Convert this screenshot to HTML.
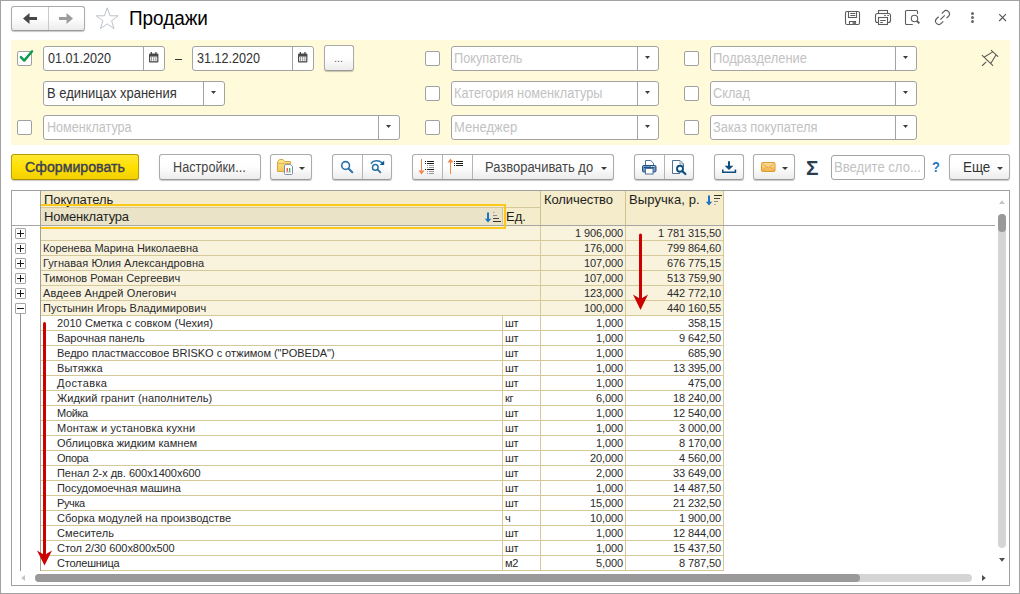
<!DOCTYPE html>
<html lang="ru">
<head>
<meta charset="utf-8">
<title>Продажи</title>
<style>
*{box-sizing:border-box;margin:0;padding:0}
html,body{width:1020px;height:594px;overflow:hidden;background:#fff}
body{position:relative;font-family:"Liberation Sans",Arial,sans-serif;font-size:13px;color:#333}
.abs,.btn,.fld,.cb,.r,.pm,.t,svg{position:absolute}
.t{white-space:nowrap;line-height:16px;transform-origin:0 50%}
#win{position:absolute;left:0;top:0;width:1020px;height:594px;border:1px solid #a2a2a2}
.btn{height:26px;top:154px;border:1px solid #ababab;border-bottom-color:#9a9a9a;border-radius:3px;background:linear-gradient(#ffffff 0%,#fefefe 50%,#ececec 100%);box-shadow:0 1px 1px rgba(0,0,0,.22)}
.btn.def{background:linear-gradient(#ffe836 0%,#ffe000 50%,#f3cf00 100%);border-color:#b89c00;border-bottom-color:#a98f00}
.sep{position:absolute;top:0;width:1px;height:24px;background:#b4b4b4}
.dd2{position:absolute;width:5px;height:3px;background:#3c3c3c;clip-path:polygon(0 0,100% 0,50% 100%)}
.dd{position:absolute;width:0;height:0;border-left:3px solid transparent;border-right:3px solid transparent;border-top:3px solid #3c3c3c}
#flt{position:absolute;left:11px;top:40px;width:999px;height:105px;background:#fffad9}
.fld{height:25px;border:1px solid #a3a3a3;border-radius:3px;background:#fff}
.fld .sep{background:#a3a3a3;height:23px}
.cb{width:15px;height:15px;border:1px solid #a0a0a0;border-radius:2px;background:#fff}
#tbl{position:absolute;left:11px;top:190px;width:999px;height:396px;border:1px solid #9f9f9f;background:#fff}
.hd{position:absolute;font-size:13px;line-height:15px;color:#1e1e1e;white-space:nowrap}
.r{left:41px;width:683px;height:15px;font-size:11px;line-height:14px;color:#2a2a2a;border-bottom:1px solid #d6c999;background:#fff;white-space:nowrap}
.r.g{background:#f9f3de}
.c{position:absolute;top:0;height:14px;overflow:hidden}
.c.n{left:0;width:461px;padding-left:2px}
.c.n1{padding-left:16px}
.c.u{left:461px;width:38px;border-left:1px solid #d6c999;padding-left:2px;letter-spacing:-0.2px}
.c.q{left:499px;width:85px;border-left:1px solid #d6c999;text-align:right;padding-right:2px;letter-spacing:-0.1px}
.c.v{left:584px;width:99px;border-left:1px solid #d6c999;border-right:1px solid #d6c999;text-align:right;padding-right:2px;letter-spacing:-0.1px}
.pm{left:15px;width:11px;height:11px;border:1px solid #a6a6a6;border-radius:1px;background:#fff}
.pm .h{position:absolute;left:1px;top:4px;width:7px;height:1px;background:#1a1a1a}
.pm .v{position:absolute;left:4px;top:1px;width:1px;height:7px;background:#1a1a1a}
</style>
</head>
<body>
<!-- ===== title bar ===== -->
<div class="btn" style="left:11px;top:6px;width:74px;height:25px"><span class="sep" style="left:36px;height:23px;background:#c9c9c9"></span>
<svg style="left:0;top:0" width="72" height="23" viewBox="0 0 72 23"><path d="M11 11.5 L17.5 6 V10 H25 V13 H17.5 V17z" fill="#474747"/><path d="M61 11.5 L54.5 6 V10 H47 V13 H54.5 V17z" fill="#9c9c9c"/></svg></div>
<svg style="left:95px;top:7px" width="24" height="23" viewBox="0 0 24 23"><path d="M12.2 0.8 L15 8.8 H23.2 L16.6 13.8 L19 21.7 L12.2 16.9 L5.4 21.7 L7.8 13.8 L1.2 8.8 H9.4z" fill="#fff" stroke="#bcc2ca" stroke-width="1"/></svg>

<svg style="left:840px;top:4px" width="176" height="28" viewBox="840 4 176 28" fill="none" stroke="#5c5c5c" stroke-width="1.1">
<rect x="845.5" y="11.5" width="14" height="13" rx="1.6"/>
<path d="M848.5 11.5v6h8v-6M850.3 13.5h5M850.3 15.5h5M849.5 24.5v-3h6v3"/>
<rect x="852.5" y="22" width="3" height="2.5" fill="#777" stroke="none"/>
<rect x="878.5" y="10.5" width="9" height="3"/>
<rect x="875.5" y="13.5" width="15" height="9" rx="2"/>
<rect x="878.5" y="17.5" width="9" height="7" fill="#fff"/>
<path d="M884.2 15.5h1.6M887.3 15.5h1.6M880.2 20.5h5.5M880.2 22.5h2.6"/>
<path d="M912.8 24.5H906.5a1 1 0 0 1-1-1V11.5a1 1 0 0 1 1-1H916.5a1 1 0 0 1 1 1V14"/>
<circle cx="914.5" cy="18.5" r="3.2" fill="#fff"/>
<path d="M917 21L919.3 23.4" stroke-width="2"/>
<g transform="translate(942.5 17.5) rotate(-45)"><path d="M2.4 -3.3H5.1A3.3 3.3 0 0 1 5.1 3.3H2.4M-2.2 3.3H-5.1A3.3 3.3 0 0 1 -5.1 -3.3H-2.2M-3 0H3.1" stroke-width="1.15"/></g>
<g fill="#6a6a6a" stroke="none"><circle cx="972.5" cy="13.5" r="1.5"/><circle cx="972.5" cy="17.5" r="1.5"/><circle cx="972.5" cy="21.5" r="1.5"/></g>
<path d="M999.2 14.2L1006 21M1006 14.2L999.2 21" stroke="#555"/>
</svg>


<!-- ===== filter panel ===== -->
<div id="flt"></div>
<div class="cb" style="left:17px;top:51px"></div>
<svg style="left:17px;top:47px" width="18" height="18" viewBox="0 0 18 18"><path d="M3.9 10.1 L7.2 13.6 L15.1 4.3" fill="none" stroke="#0d9a4a" stroke-width="2.4" stroke-linecap="round" stroke-linejoin="round"/></svg>
<div class="fld" style="left:43px;top:46px;width:122px"><span class="sep" style="left:99px"></span></div>
<div class="abs" style="left:175px;top:59px;width:7px;height:1px;background:#333"></div>
<div class="fld" style="left:192px;top:46px;width:122px"><span class="sep" style="left:99px"></span></div>
<div class="btn" style="left:324px;top:45px;width:30px;height:26px"></div>
<div class="fld" style="left:43px;top:81px;width:182px"><span class="sep" style="left:159px"></span><span class="dd2" style="left:167px;top:9px"></span></div>
<div class="cb" style="left:17px;top:120px"></div>
<div class="fld" style="left:43px;top:115px;width:357px"><span class="sep" style="left:334px"></span><span class="dd2" style="left:342px;top:9px"></span></div>

<div class="cb" style="left:425px;top:51px"></div>
<div class="fld" style="left:451px;top:46px;width:208px"><span class="sep" style="left:185px"></span><span class="dd2" style="left:193px;top:9px"></span></div>
<div class="cb" style="left:425px;top:86px"></div>
<div class="fld" style="left:451px;top:81px;width:208px"><span class="sep" style="left:185px"></span><span class="dd2" style="left:193px;top:9px"></span></div>
<div class="cb" style="left:425px;top:120px"></div>
<div class="fld" style="left:451px;top:115px;width:208px"><span class="sep" style="left:185px"></span><span class="dd2" style="left:193px;top:9px"></span></div>

<div class="cb" style="left:684px;top:51px"></div>
<div class="fld" style="left:710px;top:46px;width:207px"><span class="sep" style="left:184px"></span><span class="dd2" style="left:192px;top:9px"></span></div>
<div class="cb" style="left:684px;top:86px"></div>
<div class="fld" style="left:710px;top:81px;width:207px"><span class="sep" style="left:184px"></span><span class="dd2" style="left:192px;top:9px"></span></div>
<div class="cb" style="left:684px;top:120px"></div>
<div class="fld" style="left:710px;top:115px;width:207px"><span class="sep" style="left:184px"></span><span class="dd2" style="left:192px;top:9px"></span></div>
<svg style="left:149px;top:52px" width="10" height="11" viewBox="0 0 10 11"><rect x="0" y="1.6" width="9.4" height="8.8" rx="1" fill="#4a4a4a"/><rect x="1.2" y="4.6" width="7" height="4.6" fill="#fff"/><rect x="1.7" y="0" width="1.3" height="2.4" fill="#4a4a4a"/><rect x="6.3" y="0" width="1.3" height="2.4" fill="#4a4a4a"/><g fill="#4a4a4a"><rect x="2" y="5.4" width="1.1" height="1.1"/><rect x="4.15" y="5.4" width="1.1" height="1.1"/><rect x="6.3" y="5.4" width="1.1" height="1.1"/><rect x="2" y="7.4" width="1.1" height="1.1"/><rect x="4.15" y="7.4" width="1.1" height="1.1"/><rect x="6.3" y="7.4" width="1.1" height="1.1"/></g></svg><svg style="left:298px;top:52px" width="10" height="11" viewBox="0 0 10 11"><rect x="0" y="1.6" width="9.4" height="8.8" rx="1" fill="#4a4a4a"/><rect x="1.2" y="4.6" width="7" height="4.6" fill="#fff"/><rect x="1.7" y="0" width="1.3" height="2.4" fill="#4a4a4a"/><rect x="6.3" y="0" width="1.3" height="2.4" fill="#4a4a4a"/><g fill="#4a4a4a"><rect x="2" y="5.4" width="1.1" height="1.1"/><rect x="4.15" y="5.4" width="1.1" height="1.1"/><rect x="6.3" y="5.4" width="1.1" height="1.1"/><rect x="2" y="7.4" width="1.1" height="1.1"/><rect x="4.15" y="7.4" width="1.1" height="1.1"/><rect x="6.3" y="7.4" width="1.1" height="1.1"/></g></svg>
<svg style="left:978px;top:46px" width="24" height="24" viewBox="978 46 24 24" fill="none" stroke="#5a5a5a" stroke-width="1.1" stroke-linecap="round"><path d="M991.3 50.4L997.8 56.4M982.2 55.3L992.7 65.4M986 62.2L982.4 65.5M984.3 57L992.4 52.1M990.9 63.3L995.8 55.2"/></svg>


<!-- ===== toolbar ===== -->
<div class="btn def" style="left:11px;width:128px"></div>
<div class="btn" style="left:159px;width:102px"></div>
<div class="btn" style="left:270px;width:42px"><span class="dd" style="left:28px;top:12px"></span></div>
<div class="btn" style="left:332px;width:60px"><span class="sep" style="left:29px"></span></div>
<div class="btn" style="left:412px;width:202px"><span class="sep" style="left:29px"></span><span class="sep" style="left:59px"></span><span class="dd" style="left:188px;top:12px"></span></div>
<div class="btn" style="left:634px;width:60px"><span class="sep" style="left:29px"></span></div>
<div class="btn" style="left:714px;width:30px"></div>
<div class="btn" style="left:753px;width:42px"><span class="dd" style="left:28px;top:12px"></span></div>
<div class="fld" style="left:831px;top:155px;width:94px;height:25px"></div>
<div class="btn" style="left:949px;width:61px"><span class="dd" style="left:47px;top:12px"></span></div>

<svg style="left:270px;top:154px" width="42" height="26" viewBox="270 154 42 26">
<defs><linearGradient id="fg" x1="0" y1="0" x2="0" y2="1"><stop offset="0" stop-color="#ffe98a"/><stop offset="1" stop-color="#f3c75a"/></linearGradient>
<linearGradient id="mg" x1="0" y1="0" x2="0" y2="1"><stop offset="0" stop-color="#fde0a0"/><stop offset="1" stop-color="#f3b34a"/></linearGradient></defs>
<path d="M277.5 171.5V161.8L279.5 159.5H283L284.6 161.5H290.5V171.5z" fill="url(#fg)" stroke="#d9a545" stroke-width="1"/>
<path d="M277.8 163.5H290.2" stroke="#e2b256" stroke-width="1" fill="none"/>
<path d="M284.5 165.6a1 1 0 0 1 1-1H290.5L292.5 166.6V173.5a1 1 0 0 1-1 1H285.5a1 1 0 0 1-1-1z" fill="#fff" stroke="#7d91a6" stroke-width="1"/>
<rect x="286.6" y="168" width="1.3" height="3.6" fill="#f04a4a"/><rect x="289" y="168" width="1.3" height="3.6" fill="#36b45a"/><rect x="286" y="171.6" width="5" height="0.8" fill="#999"/>
</svg>
<svg style="left:332px;top:154px" width="60" height="26" viewBox="332 154 60 26" fill="none" stroke="#2873a8" stroke-linecap="round">
<circle cx="345.6" cy="165.5" r="3.9" stroke-width="1.6"/><path d="M348.7 168.8L352.3 172.3" stroke-width="2"/>
<circle cx="375.3" cy="167.4" r="2.8" stroke-width="1.5"/><path d="M377.6 169.7L380.4 172.4" stroke-width="1.8"/>
<path d="M371.2 163.2C373.5 160.2 378.8 160 382.3 162.8" stroke-width="1.5"/>
<path d="M384.2 160.6V165.1H379.6z" fill="#0f5c99" stroke="none"/>
</svg>
<svg style="left:412px;top:154px" width="60" height="26" viewBox="412 154 60 26" shape-rendering="crispEdges">
<rect x="421" y="159" width="1" height="13" fill="#f4854b"/><path d="M418.5 170.5h6L421.5 174.5z" fill="#f4854b" shape-rendering="auto"/>
<g fill="#1e1e1e"><rect x="425" y="161" width="1" height="1"/><rect x="427" y="161" width="7" height="1"/><rect x="425" y="163" width="1" height="1"/><rect x="427" y="163" width="7" height="1"/><rect x="425" y="169" width="1" height="1"/><rect x="427" y="169" width="7" height="1"/></g>
<g fill="#9a9a9a"><rect x="427" y="165" width="1" height="1"/><rect x="429" y="165" width="5" height="1"/><rect x="427" y="167" width="1" height="1"/><rect x="429" y="167" width="5" height="1"/><rect x="427" y="171" width="1" height="1"/><rect x="429" y="171" width="5" height="1"/><rect x="427" y="173" width="1" height="1"/><rect x="429" y="173" width="5" height="1"/></g>
<rect x="450" y="161" width="1" height="13" fill="#f4854b"/><path d="M447.5 162.5h6L450.5 158.5z" fill="#f4854b" shape-rendering="auto"/>
<g fill="#1e1e1e"><rect x="454" y="161" width="1" height="1"/><rect x="456" y="161" width="7" height="1"/><rect x="454" y="163" width="1" height="1"/><rect x="456" y="163" width="7" height="1"/><rect x="454" y="165" width="1" height="1"/><rect x="456" y="165" width="7" height="1"/></g>
</svg>
<svg style="left:634px;top:154px" width="60" height="26" viewBox="634 154 60 26">
<path d="M645.5 165.5V160.5H650.8L653.5 163.2V165.5z" fill="#fff" stroke="#4f7196" stroke-width="1"/>
<rect x="642.5" y="165.5" width="13.5" height="6.5" rx="1.2" fill="#6f97c4" stroke="#1f4f80" stroke-width="1"/>
<path d="M644 167.5h10.5" stroke="#1f4f80" stroke-width="1" fill="none"/>
<rect x="645.5" y="168.5" width="7.5" height="5.5" fill="#fff" stroke="#4f7196" stroke-width="1"/>
<rect x="651.3" y="166.2" width="1" height="1" fill="#fff"/><rect x="653.3" y="166.2" width="1" height="1" fill="#fff"/>
<path d="M680 173.5H672.5V160.5H680L683.5 164V167" fill="#fff" stroke="#4f7196" stroke-width="1"/>
<path d="M680 160.5V164H683.5" fill="none" stroke="#8aa3bd" stroke-width="1"/>
<circle cx="680" cy="168.8" r="3" fill="#fff" stroke="#0f4f80" stroke-width="1.9"/><path d="M682.4 171.2L685.4 174" stroke="#0f4f80" stroke-width="2.2" stroke-linecap="round" fill="none"/>
</svg>
<svg style="left:714px;top:154px" width="30" height="26" viewBox="714 154 30 26"><path d="M728 161.2h2v4.6h3.4L729 170 724.6 165.8H728z" fill="#0f4f80"/><path d="M722.8 169.6v2.6h12.6v-2.6" fill="none" stroke="#0f4f80" stroke-width="1.6"/></svg>
<svg style="left:753px;top:154px" width="42" height="26" viewBox="753 154 42 26"><rect x="761.5" y="162.5" width="13.5" height="9" rx="1" fill="url(#mg)" stroke="#dc9c2e" stroke-width="1"/><path d="M762.3 163.2L768.2 168.2L774.2 163.2M762.3 170.8L766.6 166.9M774.2 170.8L769.9 166.9" fill="none" stroke="#e3a640" stroke-width="0.9"/></svg>


<!-- ===== table ===== -->
<div id="tbl"></div>

<div class="abs" style="left:41px;top:191px;width:683px;height:34px;background:#f4ecca"></div>
<div class="abs" style="left:41px;top:207px;width:499px;height:1px;background:#d6c999"></div>
<div class="abs" style="left:41px;top:208px;width:461px;height:17px;background:#eae3c8"></div>
<div class="abs" style="left:502px;top:208px;width:1px;height:17px;background:#d1c696"></div>
<div class="abs" style="left:540px;top:191px;width:1px;height:34px;background:#d0c38f"></div>
<div class="abs" style="left:625px;top:191px;width:1px;height:34px;background:#d0c38f"></div>
<div class="abs" style="left:723px;top:191px;width:1px;height:34px;background:#d0c38f"></div>
<div class="abs" style="left:40px;top:191px;width:1px;height:380px;background:#a39f90"></div>
<div class="abs" style="left:12px;top:225px;width:983px;height:1px;background:#a6a6a6"></div>
<div class="hd" style="left:44px;top:192px;letter-spacing:-0.07px">Покупатель</div>
<div class="hd" style="left:44px;top:209px;letter-spacing:-0.2px">Номенклатура</div>
<div class="hd" style="left:506px;top:209px">Ед.</div>
<div class="hd" style="left:544px;top:192px;letter-spacing:-0.1px">Количество</div>
<div class="hd" style="left:629px;top:192px;letter-spacing:0.1px">Выручка, р.</div>
<svg style="left:484px;top:210px" width="20" height="14" viewBox="0 0 20 14"><path d="M3 2.5h2v6.3h2.2L4 12.4 0.8 8.8H3z" fill="#1a73c7"/><path d="M9 2.5h1.6" stroke="#a9a9a9" fill="none"/><path d="M9 5.5h4" stroke="#8a8a8a" fill="none"/><path d="M9 8.5h6" stroke="#444" fill="none"/><path d="M9 11.5h8" stroke="#333" fill="none"/></svg>
<svg style="left:705px;top:193px" width="20" height="14" viewBox="0 0 20 14"><path d="M3 2.5h2v6.3h2.2L4 12.4 0.8 8.8H3z" fill="#1a73c7"/><path d="M9 2.5h8" stroke="#333" fill="none"/><path d="M9 5.5h6" stroke="#444" fill="none"/><path d="M9 8.5h4" stroke="#8a8a8a" fill="none"/><path d="M9 11.5h1.8" stroke="#a9a9a9" fill="none"/></svg>

<div class="r g" style="top:226px"><span class="c n"></span><span class="c q">1 906,000</span><span class="c v">1 781 315,50</span></div>
<div class="pm" style="top:228px"><i class="h"></i><i class="v"></i></div>
<div class="r g" style="top:241px"><span class="c n" style="letter-spacing:-0.052px">Коренева Марина Николаевна</span><span class="c q">176,000</span><span class="c v">799 864,60</span></div>
<div class="pm" style="top:243px"><i class="h"></i><i class="v"></i></div>
<div class="r g" style="top:256px"><span class="c n" style="letter-spacing:0.0769px">Гугнавая Юлия Александровна</span><span class="c q">107,000</span><span class="c v">676 775,15</span></div>
<div class="pm" style="top:258px"><i class="h"></i><i class="v"></i></div>
<div class="r g" style="top:271px"><span class="c n" style="letter-spacing:0.0136px">Тимонов Роман Сергеевич</span><span class="c q">107,000</span><span class="c v">513 759,90</span></div>
<div class="pm" style="top:273px"><i class="h"></i><i class="v"></i></div>
<div class="r g" style="top:286px"><span class="c n" style="letter-spacing:0.133px">Авдеев Андрей Олегович</span><span class="c q">123,000</span><span class="c v">442 772,10</span></div>
<div class="pm" style="top:288px"><i class="h"></i><i class="v"></i></div>
<div class="r g" style="top:301px"><span class="c n" style="letter-spacing:0.05px">Пустынин Игорь Владимирович</span><span class="c q">100,000</span><span class="c v">440 160,55</span></div>
<div class="pm" style="top:303px"><i class="h"></i></div>
<div class="r" style="top:316px"><span class="c n n1" style="letter-spacing:0.0741px">2010 Сметка с совком (Чехия)</span><span class="c u">шт</span><span class="c q">1,000</span><span class="c v">358,15</span></div>
<div class="r" style="top:331px"><span class="c n n1" style="letter-spacing:-0.0571px">Варочная панель</span><span class="c u">шт</span><span class="c q">1,000</span><span class="c v">9 642,50</span></div>
<div class="r" style="top:346px"><span class="c n n1" style="letter-spacing:-0.0326px">Ведро пластмассовое BRISKO с отжимом ("POBEDA")</span><span class="c u">шт</span><span class="c q">1,000</span><span class="c v">685,90</span></div>
<div class="r" style="top:361px"><span class="c n n1" style="letter-spacing:0.15px">Вытяжка</span><span class="c u">шт</span><span class="c q">1,000</span><span class="c v">13 395,00</span></div>
<div class="r" style="top:376px"><span class="c n n1" style="letter-spacing:0.386px">Доставка</span><span class="c u">шт</span><span class="c q">1,000</span><span class="c v">475,00</span></div>
<div class="r" style="top:391px"><span class="c n n1" style="letter-spacing:0.115px">Жидкий гранит (наполнитель)</span><span class="c u">кг</span><span class="c q">6,000</span><span class="c v">18 240,00</span></div>
<div class="r" style="top:406px"><span class="c n n1" style="letter-spacing:-0.375px">Мойка</span><span class="c u">шт</span><span class="c q">1,000</span><span class="c v">12 540,00</span></div>
<div class="r" style="top:421px"><span class="c n n1" style="letter-spacing:0.157px">Монтаж и установка кухни</span><span class="c u">шт</span><span class="c q">1,000</span><span class="c v">3 000,00</span></div>
<div class="r" style="top:436px"><span class="c n n1" style="letter-spacing:0.0409px">Облицовка жидким камнем</span><span class="c u">шт</span><span class="c q">1,000</span><span class="c v">8 170,00</span></div>
<div class="r" style="top:451px"><span class="c n n1" style="letter-spacing:-0.3px">Опора</span><span class="c u">шт</span><span class="c q">20,000</span><span class="c v">4 560,00</span></div>
<div class="r" style="top:466px"><span class="c n n1" style="letter-spacing:-0.036px">Пенал 2-х дв. 600х1400х600</span><span class="c u">шт</span><span class="c q">2,000</span><span class="c v">33 649,00</span></div>
<div class="r" style="top:481px"><span class="c n n1" style="letter-spacing:-0.0316px">Посудомоечная машина</span><span class="c u">шт</span><span class="c q">1,000</span><span class="c v">14 487,50</span></div>
<div class="r" style="top:496px"><span class="c n n1" style="letter-spacing:-0.375px">Ручка</span><span class="c u">шт</span><span class="c q">15,000</span><span class="c v">21 232,50</span></div>
<div class="r" style="top:511px"><span class="c n n1" style="letter-spacing:0.0517px">Сборка модулей на производстве</span><span class="c u">ч</span><span class="c q">10,000</span><span class="c v">1 900,00</span></div>
<div class="r" style="top:526px"><span class="c n n1" style="letter-spacing:0.1px">Смеситель</span><span class="c u">шт</span><span class="c q">1,000</span><span class="c v">12 844,00</span></div>
<div class="r" style="top:541px"><span class="c n n1" style="letter-spacing:-0.05px">Стол 2/30 600х800х500</span><span class="c u">шт</span><span class="c q">1,000</span><span class="c v">15 437,50</span></div>
<div class="r" style="top:556px"><span class="c n n1" style="letter-spacing:-0.222px">Столешница</span><span class="c u">м2</span><span class="c q">5,000</span><span class="c v">8 787,50</span></div>

<div class="abs" style="left:20px;top:314px;width:1px;height:257px;background:#8f8f8f"></div>
<div class="abs" style="left:41px;top:204px;width:465px;height:2px;background:#fdc81c"></div>
<div class="abs" style="left:41px;top:227px;width:465px;height:2px;background:#fdc81c"></div>
<div class="abs" style="left:504px;top:204px;width:2px;height:25px;background:#fdc81c"></div>
<svg style="left:30px;top:228px" width="30" height="345" viewBox="0 0 30 345"><path d="M14.5 95.5V330" stroke="#cc0000" stroke-width="3" stroke-linecap="round" fill="none"/><path d="M7 322.5 L14.5 327 L22 322.5 L14.5 337.5z" fill="#cc0000"/></svg>
<svg style="left:626px;top:228px" width="30" height="90" viewBox="0 0 30 90"><path d="M14.5 7V72" stroke="#cc0000" stroke-width="3" stroke-linecap="round" fill="none"/><path d="M7 66.5 L14.5 71 L22 66.5 L14.5 82z" fill="#cc0000"/></svg>
<!-- scrollbars -->
<div class="abs" style="left:998px;top:214px;width:8px;height:334px;border-radius:4px;background:#d5d5d5"></div>
<div class="abs" style="left:998px;top:214px;width:8px;height:18px;border-radius:4px;background:#999"></div>
<svg style="left:997px;top:198px" width="10" height="8" viewBox="0 0 10 8"><path d="M2 6 L5 2.2 L8 6z" fill="#c4c4c4"/></svg>
<svg style="left:997px;top:556px" width="10" height="8" viewBox="0 0 10 8"><path d="M2 2 L5 5.8 L8 2z" fill="#4d4d4d"/></svg>
<div class="abs" style="left:35px;top:574px;width:937px;height:8px;border-radius:4px;background:#d5d5d5"></div>
<div class="abs" style="left:35px;top:574px;width:825px;height:8px;border-radius:4px;background:#999"></div>
<svg style="left:19px;top:573px" width="8" height="10" viewBox="0 0 8 10"><path d="M6 2 L2.2 5 L6 8z" fill="#c4c4c4"/></svg>
<svg style="left:980px;top:573px" width="8" height="10" viewBox="0 0 8 10"><path d="M2 2 L5.8 5 L2 8z" fill="#4d4d4d"/></svg>

<span class="t" style="left:129px;top:6px;font-size:20px;transform:scaleX(0.945);color:#000;line-height:24px">Продажи</span>
<span class="t" style="left:47.6px;top:50px;font-size:14px;transform:scaleX(0.9);color:#333;">01.01.2020</span>
<span class="t" style="left:196.6px;top:50px;font-size:14px;transform:scaleX(0.9);color:#333;">31.12.2020</span>
<span class="t" style="left:334px;top:50px;font-size:11px;transform:scaleX(1);color:#666;">...</span>
<span class="t" style="left:47px;top:85px;font-size:14px;transform:scaleX(0.925);color:#333;">В единицах хранения</span>
<span class="t" style="left:47px;top:119px;font-size:14px;transform:scaleX(0.9);color:#c2c2c2;">Номенклатура</span>
<span class="t" style="left:454px;top:50px;font-size:14px;transform:scaleX(0.91);color:#c2c2c2;">Покупатель</span>
<span class="t" style="left:454px;top:85px;font-size:14px;transform:scaleX(0.91);color:#c2c2c2;">Категория номенклатуры</span>
<span class="t" style="left:454px;top:119px;font-size:14px;transform:scaleX(0.93);color:#c2c2c2;">Менеджер</span>
<span class="t" style="left:713px;top:50px;font-size:14px;transform:scaleX(0.92);color:#c2c2c2;">Подразделение</span>
<span class="t" style="left:713px;top:85px;font-size:14px;transform:scaleX(0.91);color:#c2c2c2;">Склад</span>
<span class="t" style="left:713px;top:119px;font-size:14px;transform:scaleX(0.92);color:#c2c2c2;">Заказ покупателя</span>
<span class="t" style="left:25.3px;top:159px;font-size:14px;transform:scaleX(1.012);color:#3a4058;-webkit-text-stroke:0.4px #3a4058">Сформировать</span>
<span class="t" style="left:173px;top:159px;font-size:14px;transform:scaleX(0.905);color:#444;">Настройки...</span>
<span class="t" style="left:485px;top:159px;font-size:14px;transform:scaleX(0.927);color:#444;">Разворачивать до</span>
<span class="t" style="left:834px;top:159px;font-size:14px;transform:scaleX(0.936);color:#c2c2c2;">Введите сло...</span>
<span class="t" style="left:931.5px;top:159px;font-size:14px;transform:scaleX(0.92);color:#2079c2;font-weight:bold">?</span>
<span class="t" style="left:963px;top:159px;font-size:14px;transform:scaleX(0.96);color:#333;">Еще</span>
<span class="t" style="left:806px;top:157px;font-size:20px;transform:scaleX(1.04);color:#2a3d52;font-weight:bold;line-height:22px">Σ</span>
<div id="win"></div>
</body>
</html>
